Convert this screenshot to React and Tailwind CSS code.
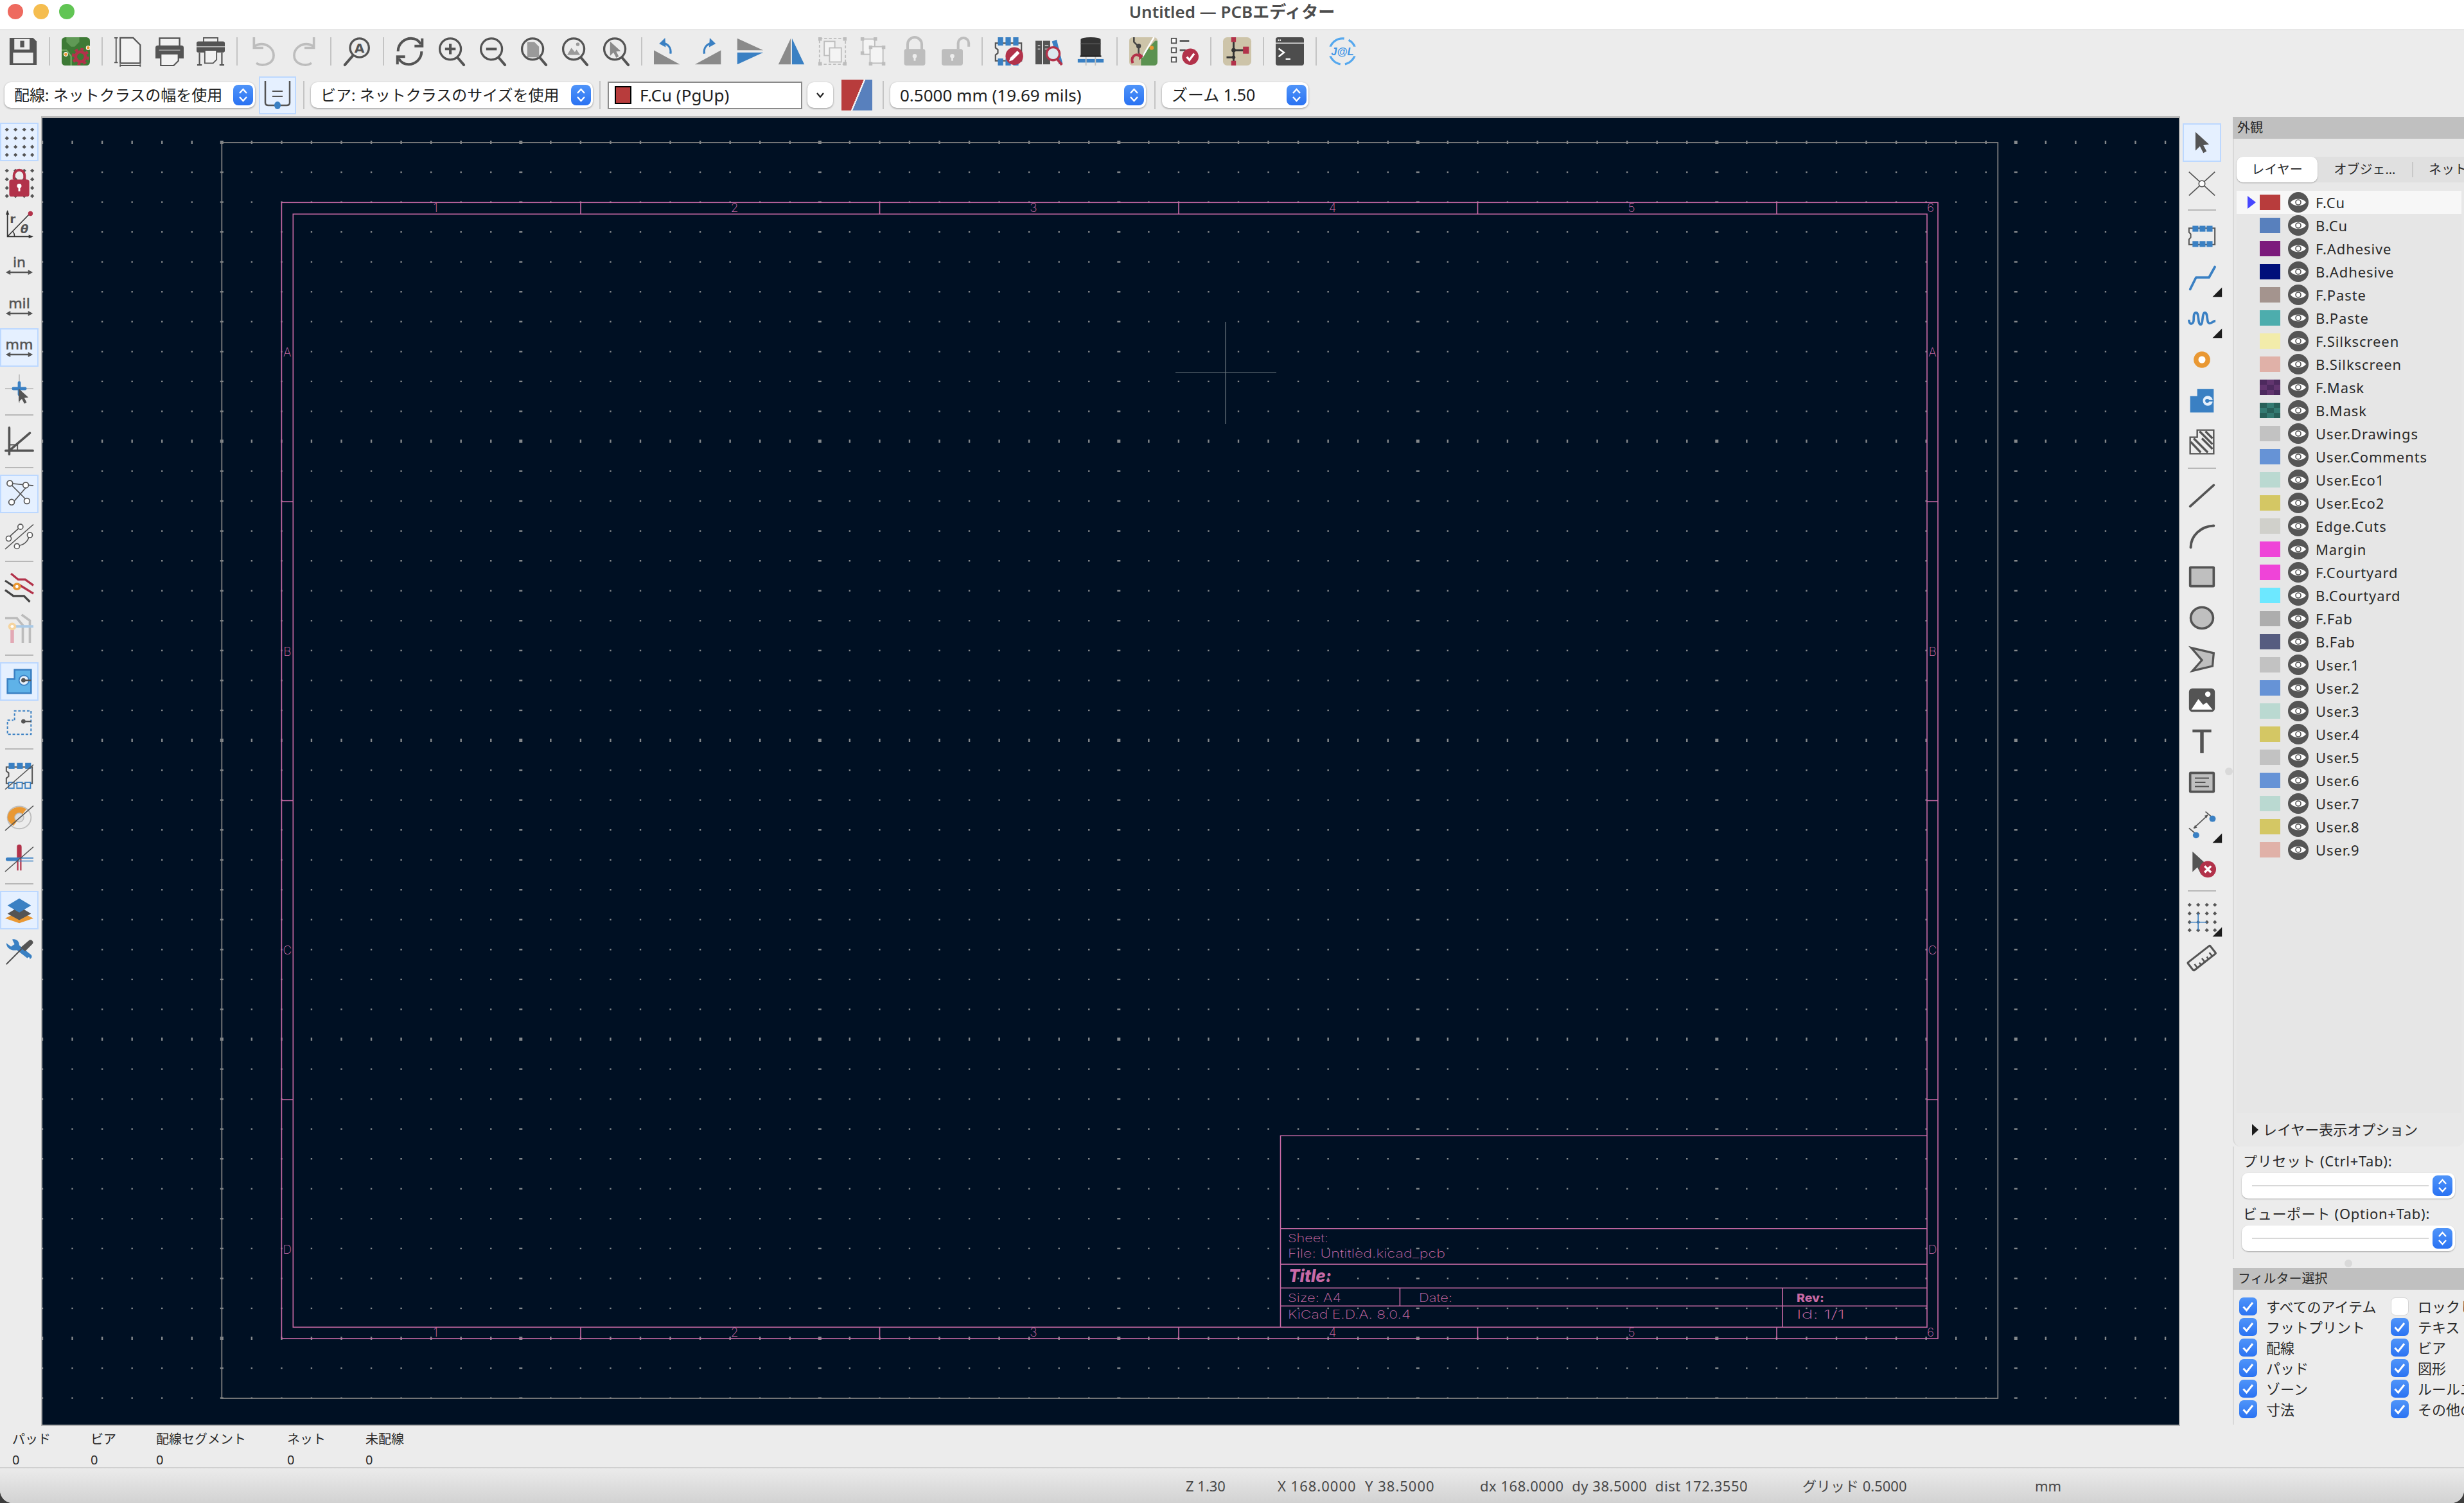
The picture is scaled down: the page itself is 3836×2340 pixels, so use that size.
import React from 'react'

const D = '#545454'
const B = '#3a80c3'
const R = '#b2324a'
const O = '#e99833'
const G = '#bdbdbd'
const PINK = '#c86aa6'

const Lens = ({ children }) => (
  <>
    <path d="M17 16.5 L23 23.5" stroke={D} strokeWidth="2.2" strokeLinecap="round" />
    <circle cx="11.5" cy="10" r="9" fill="#ececec" stroke={D} strokeWidth="1.8" />
    {children}
  </>
)

const Cursor = ({ x = 0, y = 0, s = 1, fill = D }) => (
  <path transform={`translate(${x} ${y}) scale(${s})`} d="M0 0 L0 15 L3.6 11.6 L6.4 17 L9 15.6 L6.4 10.6 L11 10 Z" fill={fill} />
)

const Diamonds = () => {
  const pts = [1.5, 8.8, 16.2, 23]
  return pts.flatMap((y, i) =>
    pts.map((x, j) => (
      <rect key={`${i}-${j}`} x={x - 1.2} y={y - 1.2} width="2.4" height="2.4" transform={`rotate(45 ${x} ${y})`} fill={D} />
    ))
  )
}

const Slash = () => <path d="M0 24 L24 3" stroke={D} strokeWidth="0.9" />

const More = () => <polygon points="29,20.5 29,28.5 21,28.5" fill="#1c1c1c" />

const BadgeCheck = ({ cx = 18, cy = 17, r = 6.5 }) => (
  <>
    <circle cx={cx} cy={cy} r={r} fill={R} />
    <path d={`M${cx - 3} ${cy + 0.2} l2.2 2.6 l4 -5.4`} stroke="#fff" strokeWidth="1.8" fill="none" />
  </>
)

const Dim = ({ y = 18 }) => (
  <path d={`M0.5 ${y} L4.5 ${y - 2.2} V${y - 0.7} H19.5 V${y - 2.2} L23.5 ${y} L19.5 ${y + 2.2} V${y + 0.7} H4.5 V${y + 2.2} Z`} fill={D} />
)

const UnitText = ({ t }) => (
  <text x="12" y="13.5" textAnchor="middle" fontSize="12" stroke={D} strokeWidth="0.3" fill={D} fontFamily="DejaVu Sans, sans-serif">{t}</text>
)

const Padlock = ({ open }) => (
  <>
    <path d={open ? 'M15 10V5a4.5 4.5 0 0 1 9 0v3' : 'M6 11V6a6 6 0 0 1 12 0v5'} transform={open ? 'translate(-1 0)' : ''} fill="none" stroke={G} strokeWidth="2.2" />
    <rect x={open ? 0 : 3} y="10" width="18" height="14" rx="2" fill={G} />
    <circle cx={open ? 9 : 12} cy="16" r="1.8" fill="#ececec" />
    <rect x={open ? 8.2 : 11.2} y="16" width="1.6" height="4" fill="#ececec" />
  </>
)

const GroupPages = ({ un }) =>
  un ? (
    <>
      <rect x="3" y="1.5" width="10" height="13" fill="#f4f4f4" stroke={G} />
      <rect x="9" y="8" width="11" height="14" fill="#f4f4f4" stroke={G} />
      {[[1, 0], [12, 0], [1, 12], [8, 7], [19, 7], [8, 21], [19, 21]].map(([x, y]) => (
        <rect key={`${x}${y}`} x={x} y={y} width="3" height="3" fill={G} />
      ))}
    </>
  ) : (
    <>
      <rect x="1" y="1" width="22" height="22" fill="none" stroke={G} strokeWidth="1" strokeDasharray="2.4 1.6" />
      <rect x="5" y="3.5" width="9" height="12" fill="#f4f4f4" stroke={G} />
      <rect x="9.5" y="9" width="10" height="12" fill="#f4f4f4" stroke={G} />
      {[[0, 0], [21, 0], [0, 21], [21, 21]].map(([x, y]) => (
        <rect key={`${x}${y}`} x={x} y={y} width="3" height="3" fill={G} />
      ))}
    </>
  )

const icons = {
  save: (
    <>
      <path d="M0.5 0.5h20l3 3v20h-23z" fill={D} />
      <rect x="4.5" y="1.5" width="13" height="9" fill="#ececec" />
      <rect x="9.5" y="3" width="3.5" height="5.5" fill={D} />
      <rect x="3.5" y="13" width="17" height="9" fill="#ececec" />
    </>
  ),
  settings: (
    <>
      <rect x="0" y="0" width="24" height="24" rx="3" fill="#3d7a35" />
      <path d="M4 0v4l4 4h3l4 -4V0z" fill="#5f9a55" />
      <path d="M0 11h4l4 5v8" stroke="#6fa862" strokeWidth="1.2" fill="none" />
      <circle cx="16" cy="16.5" r="4.2" fill="#3d7a35" stroke={R} strokeWidth="2.6" />
      <circle cx="16" cy="16.5" r="6.4" fill="none" stroke={R} strokeWidth="2" strokeDasharray="2.6 2.4" />
      <circle cx="3.5" cy="14.5" r="1.6" fill={O} stroke="#fff" strokeWidth="0.6" />
      <circle cx="22.5" cy="9" r="1.6" fill={O} stroke="#fff" strokeWidth="0.6" />
    </>
  ),
  page: (
    <>
      <path d="M1.5 0v22M0 0.5h3M0 21.5h3" stroke={D} strokeWidth="1" fill="none" />
      <path d="M5 0.5h11l6 6v15.5h-17z" fill="#f2f2f2" stroke={D} strokeWidth="1.2" />
      <path d="M5 24h17M5 23v2M22 23v2" stroke={D} strokeWidth="1" fill="none" />
    </>
  ),
  print: (
    <>
      <rect x="3.5" y="0.8" width="17" height="9" fill="#f0f0f0" stroke={D} strokeWidth="1.3" />
      <path d="M0 9a2 2 0 0 1 2 -2h20a2 2 0 0 1 2 2v9h-24z" fill={D} />
      <path d="M3 11h18" stroke="#9a9a9a" strokeWidth="1" />
      <path d="M4.5 14h15v6l-4 4h-11z" fill="#f2f2f2" stroke={D} strokeWidth="1.2" />
    </>
  ),
  plot: (
    <>
      <rect x="6" y="0.5" width="12" height="5" fill="#f0f0f0" stroke={D} strokeWidth="1" />
      <rect x="0" y="3.5" width="24" height="9.5" rx="1.5" fill={D} />
      <path d="M0 8h24" stroke="#bdbdbd" strokeWidth="0.8" />
      <path d="M2.5 13v10M21.5 13v10M0.5 23.5h4M19.5 23.5h4" stroke={D} strokeWidth="1.2" />
      <path d="M7 11h10v8l-3 3h-7z" fill="#f2f2f2" stroke={D} strokeWidth="1" />
    </>
  ),
  undo: (
    <g fill="none" stroke={G} strokeWidth="2">
      <path d="M4 8C8 5 13 5 17 8C22 12 22 19 17 22C13 24 9 24 6 22" />
      <path d="M4 0V9H12" />
    </g>
  ),
  redo: (
    <g transform="translate(24 0) scale(-1 1)" fill="none" stroke={G} strokeWidth="2">
      <path d="M4 8C8 5 13 5 17 8C22 12 22 19 17 22C13 24 9 24 6 22" />
      <path d="M4 0V9H12" />
    </g>
  ),
  find: (
    <>
      <path d="M8.5 15.5L1.5 23.5" stroke={D} strokeWidth="2.2" strokeLinecap="round" />
      <circle cx="14" cy="9" r="8" fill="#ececec" stroke={D} strokeWidth="1.8" />
      <text x="14" y="13" textAnchor="middle" fontSize="11" fontWeight="700" fill={D} fontFamily="DejaVu Sans, sans-serif">A</text>
    </>
  ),
  refresh: (
    <g fill="none" stroke={D} strokeWidth="2.2">
      <path d="M2 12C2 5 8 1 13 1C16.5 1 19.5 2.5 21.5 6" />
      <path d="M22.5 1V7.5H16" />
      <path d="M22 12C22 19 16 23 11 23C7.5 23 4.5 21.5 2.5 18" />
      <path d="M1.5 23V16.5H8" />
    </g>
  ),
  zoomIn: <Lens><path d="M7 10h9M11.5 5.5v9" stroke={D} strokeWidth="2.2" /></Lens>,
  zoomOut: <Lens><path d="M7 10h9" stroke={D} strokeWidth="2.2" /></Lens>,
  zoomFit: <Lens><path d="M7 4h6l4 4v9h-10z" fill="#9a9a9a" /></Lens>,
  zoomObj: <Lens><path d="M6 15l3.5 -6 3 3.5 1.5 -2 3 4.5z" fill="#9a9a9a" /><circle cx="15" cy="6" r="1.5" fill="#9a9a9a" /></Lens>,
  zoomSel: <Lens><Cursor x={7.5} y={3.5} s={0.82} fill="#8a8a8a" /></Lens>,
  rotCcw: (
    <>
      <polygon points="0,23 0,11 22,23" fill="#8a8a8a" />
      <path d="M14 14C15 9 12 6 8 5" stroke={B} strokeWidth="1.8" fill="none" />
      <path d="M9.5 0.5L4.5 5.5L10 8.5z" fill={B} />
    </>
  ),
  rotCw: (
    <>
      <polygon points="22,23 22,11 0,23" fill="#8a8a8a" />
      <path d="M8 14C7 9 10 6 14 5" stroke={B} strokeWidth="1.8" fill="none" />
      <path d="M12.5 0.5L17.5 5.5L12 8.5z" fill={B} />
    </>
  ),
  mirrorV: (
    <>
      <polygon points="1,1 23,11 1,11" fill="#8a8a8a" />
      <polygon points="1,13 23,13 1,23" fill={B} />
    </>
  ),
  mirrorH: (
    <>
      <polygon points="11.5,1 1,23 11.5,23" fill="#8a8a8a" />
      <polygon points="12.5,1 23,23 12.5,23" fill={B} />
    </>
  ),
  group: <GroupPages />,
  ungroup: <GroupPages un />,
  lock: <Padlock />,
  unlock: <Padlock open />,
  drc: (
    <>
      <path d="M1 5h22v15h-22v-5l2 -1.5v-3l-2 -1.5z" fill="none" stroke={D} strokeWidth="1.2" />
      {[3, 9.5, 16].map((x) => <rect key={x} x={x} y="0" width="4.5" height="7" fill={B} />)}
      {[3, 9.5, 16].map((x) => <rect key={x} x={x} y="18" width="4.5" height="6" fill={B} />)}
      <circle cx="17" cy="16" r="7.5" fill={R} />
      <path d="M12.5 20.5l1 -3 6 -6 2 2 -6 6z" fill="#fff" />
    </>
  ),
  library: (
    <>
      <rect x="0" y="3" width="5.5" height="20" fill={D} />
      <rect x="6.5" y="3" width="6" height="20" fill={D} />
      <path d="M2 7h2M2 10h2M8 7h3M8 10h3" stroke="#bbb" strokeWidth="1" />
      <path d="M14 3.5l4 -1.5 5 20 -3 1z" fill={B} />
      <circle cx="15" cy="14" r="5.5" fill="#dce8ee" stroke={R} strokeWidth="1.8" />
      <path d="M18.5 18.5l4 5" stroke={R} strokeWidth="2.2" />
    </>
  ),
  viewer3d: (
    <>
      <path d="M3.5 2a8.5 2 0 0 1 17 0v14h-17z" fill="#333" />
      <path d="M3.5 5.5h17" stroke="#555" strokeWidth="0.8" />
      <rect x="1" y="18.5" width="22" height="3" fill={B} />
      <path d="M8 16v8M16 16v8" stroke="#c0c0c0" strokeWidth="1" />
      <rect x="3" y="15.5" width="18" height="1.2" fill="#222" />
    </>
  ),
  router: (
    <>
      <rect x="0" y="0" width="24" height="24" rx="3" fill="#cdc4a9" />
      <path d="M24 3v18a3 3 0 0 1 -3 3H10v-8l12 -13z" fill="#5b9251" />
      <path d="M21 0L11 17" stroke="#fff" strokeWidth="1.4" />
      <path d="M4 0v4l4 4v6" stroke="#444" strokeWidth="1.4" fill="none" />
      <circle cx="8" cy="7.5" r="2" fill="#444" />
      <circle cx="19" cy="9" r="1.8" fill={O} />
      <path d="M3 22C1 17 5 13 9 16" stroke={R} strokeWidth="2.2" fill="none" />
      <path d="M8 13l4 3 -3.5 3.5z" fill={R} />
    </>
  ),
  checklist: (
    <>
      {[3, 11, 19].map((y) => <rect key={y} x="1" y={y - 2} width="4" height="4" fill="#fff" stroke={D} strokeWidth="1" />)}
      <path d="M8 3h8M8 11h5" stroke={D} strokeWidth="1.5" />
      <BadgeCheck cx={17} cy={16.5} r={7} />
    </>
  ),
  schematic: (
    <>
      <rect x="0" y="0" width="24" height="24" rx="3.5" fill="#cdc4a9" />
      <path d="M9 2v20M9 11h10M9 17H3" stroke="#333" strokeWidth="1.6" />
      <circle cx="9" cy="11" r="1.8" fill="#333" />
      <circle cx="9" cy="17" r="1.5" fill="#333" />
      <rect x="7" y="0" width="4" height="4" fill={R} />
      <rect x="17" y="8" width="5" height="6" fill={R} />
      <rect x="7" y="20" width="4" height="4" fill={R} />
    </>
  ),
  terminal: (
    <>
      <rect x="0" y="0" width="24" height="24" rx="2" fill="#4d4d4d" />
      <path d="M0 5h24" stroke="#fff" strokeWidth="0.7" />
      <path d="M2 2.5h3" stroke="#fff" strokeWidth="1.2" strokeDasharray="0.9 0.6" />
      <path d="M2.5 9.5l4.5 3.5 -4.5 3.5" stroke="#fff" strokeWidth="1.4" fill="none" />
      <path d="M8.5 18.5h4" stroke="#fff" strokeWidth="1.2" />
    </>
  ),
  jlc: (
    <>
      <circle cx="12" cy="12" r="11" fill="none" stroke="#55a8ee" strokeWidth="1.8" strokeDasharray="15 4" />
      <rect x="0" y="8" width="24" height="8" fill="#ececec" />
      <text x="12" y="15.5" textAnchor="middle" fontSize="9" fontStyle="italic" fontWeight="700" fill="#3f95e6" fontFamily="Liberation Sans, sans-serif">J@L</text>
    </>
  ),
  grid: <Diamonds />,
  gridLock: (
    <>
      <Diamonds />
      <path d="M7.5 9V5.5a4.5 4.5 0 0 1 9 0V9" fill="none" stroke={R} strokeWidth="2.2" />
      <rect x="3.5" y="9" width="17" height="14.5" rx="2" fill={R} />
      <circle cx="12" cy="14.5" r="1.9" fill="#fff" />
      <rect x="11.2" y="15" width="1.6" height="4" fill="#fff" />
    </>
  ),
  polar: (
    <>
      <path d="M2 1v21.5h21" fill="none" stroke="#333" strokeWidth="1" />
      <path d="M2 0l-1.5 4h3zM24 22.5l-4 -1.5v3z" fill="#333" />
      <path d="M2 22.5L21 3" stroke="#333" strokeWidth="0.9" />
      <path d="M8 22.5a7 7 0 0 0 -1.5 -4.5" stroke="#333" strokeWidth="0.8" fill="none" />
      <circle cx="21.5" cy="3" r="2" fill={R} />
      <text x="4" y="11" fontSize="10" fontWeight="700" fill={D} fontFamily="DejaVu Sans, sans-serif">r</text>
      <text x="13" y="19.5" fontSize="10" fontStyle="italic" fontWeight="700" fill={D} fontFamily="DejaVu Sans, sans-serif">θ</text>
    </>
  ),
  inch: <><UnitText t="in" /><Dim /></>,
  mil: <><UnitText t="mil" /><Dim /></>,
  mm: <><UnitText t="mm" /><Dim /></>,
  fullCross: (
    <>
      <path d="M0 12h24M12 0v24" stroke="#b5b5b5" strokeWidth="0.8" />
      <path d="M7 12h10M12 7v10" stroke={B} strokeWidth="2.6" strokeLinecap="round" />
      <Cursor x={11.5} y={12} s={0.75} />
    </>
  ),
  angle: (
    <>
      <path d="M3.5 0.5V23M0.5 20H23.5" stroke={D} strokeWidth="2" strokeLinecap="round" />
      <path d="M3.5 20L21 5" stroke={D} strokeWidth="2" strokeLinecap="round" />
      <path d="M3.5 15h7v5" stroke={D} strokeWidth="1" fill="none" />
    </>
  ),
  ratsnest: (
    <>
      <path d="M4 3L24 5M7 19L19 5M4 3L19 18" stroke={D} strokeWidth="0.9" />
      {[[4, 3], [17.5, 4.5], [5.5, 19], [18.5, 18]].map(([x, y]) => (
        <circle key={x} cx={x} cy={y} r="2.4" fill="#fff" stroke={D} strokeWidth="0.9" />
      ))}
    </>
  ),
  curved: (
    <>
      <path d="M0 24L24 3M3 14L13 5M10 21C15 21 19 18 20 14" fill="none" stroke={D} strokeWidth="0.9" />
      {[[3, 15], [13, 5], [10, 21.5], [21, 12]].map(([x, y]) => (
        <circle key={x} cx={x} cy={y} r="2.2" fill="#fff" stroke={D} strokeWidth="0.9" />
      ))}
    </>
  ),
  tracks: (
    <>
      <path d="M5 0L11 5H17L24 10M11 9L16 12L24 17" stroke={R} strokeWidth="1.8" fill="none" />
      <path d="M0 6L9 12M0 14L7 19H16L21 24" stroke="#444" strokeWidth="1.8" fill="none" />
      <ellipse cx="10" cy="11" rx="3.4" ry="3.2" fill={O} />
      <circle cx="10" cy="11" r="1.3" fill="#fff" />
    </>
  ),
  tracksDim: (
    <>
      <path d="M0 3H10L15 9V24M14 0L21 5V24" stroke="#bcbcbc" strokeWidth="2" fill="none" />
      <path d="M6 13V24" stroke="#e2a8b4" strokeWidth="3" />
      <path d="M6 10H24" stroke="#a9c9e6" strokeWidth="2.2" />
      <ellipse cx="6" cy="10" rx="3.4" ry="3.2" fill="#f5d49f" />
      <circle cx="6" cy="10" r="1.3" fill="#fff" />
    </>
  ),
  zoneFill: (
    <>
      <path d="M8 10V2H22V22H2V10z" fill="#5fb2e8" stroke={B} strokeWidth="1.4" />
      <circle cx="16" cy="11" r="4.2" fill="#e6f0fb" stroke={B} strokeWidth="1" />
      <circle cx="15.5" cy="11" r="1.8" fill={D} />
      <path d="M15.5 11H22" stroke={D} strokeWidth="1.3" />
    </>
  ),
  zoneDash: (
    <>
      <path d="M8 10V2H22V22H2V10H7" fill="none" stroke={B} strokeWidth="1.1" strokeDasharray="2.2 1.5" />
      <circle cx="15.5" cy="11" r="1.8" fill={D} />
      <path d="M15.5 11H22" stroke={D} strokeWidth="1.3" />
    </>
  ),
  fpOff: (
    <>
      <path d="M1 5h22v14h-22v-4.5l2 -1.5v-3l-2 -1.5z" fill="none" stroke={D} strokeWidth="1.1" />
      {[3, 10, 17].map((x) => <rect key={x} x={x} y="1.5" width="5" height="5" fill={B} />)}
      {[3, 10, 17].map((x) => <rect key={x} x={x} y="18" width="4.5" height="5" fill="#ececec" stroke={B} strokeWidth="1" />)}
      <Slash />
    </>
  ),
  padOff: (
    <>
      <ellipse cx="12" cy="13" rx="10" ry="9.5" fill="none" stroke="#bdbdbd" strokeWidth="1" />
      <path d="M2 13a10 9.5 0 0 1 16 -7L7 20a10 9.5 0 0 1 -5 -7z" fill={O} />
      <circle cx="12" cy="13" r="3.8" fill="#ddd" stroke="#bdbdbd" strokeWidth="0.8" />
      <Slash />
    </>
  ),
  viaOff: (
    <>
      <path d="M10 3a2 2 0 0 1 4 0v10h-4z" fill={R} />
      <path d="M10.7 13v10M13.3 13v10" stroke={R} strokeWidth="1.2" />
      <path d="M2 13.5H10" stroke={B} strokeWidth="3" strokeLinecap="round" />
      <path d="M10 12.5H24M10 15H24" stroke={B} strokeWidth="0.9" />
      <Slash />
    </>
  ),
  layers: (
    <>
      <polygon points="12,14 24,20 12,24 0,20" fill={O} transform="translate(0 -1)" />
      <polygon points="12,9 22,15 12,20.5 2,15" fill={D} />
      <polygon points="12,2 22,8 12,14 2,8" fill={B} />
    </>
  ),
  tools: (
    <>
      <path d="M1 5l4 3 3 -2 -2 -4c3 -1 6 1 6 5l10 8c2 2 -1 5 -3 3l-9 -7c-5 1 -9 -2 -9 -6z" fill={B} />
      <circle cx="20" cy="18" r="0.9" fill="#fff" />
      <path d="M1 23L14 10" stroke={D} strokeWidth="1.1" />
      <path d="M13 9l7 -6a2 2 0 0 1 3 3l-6 6z" fill={D} />
    </>
  ),
  select: <Cursor x={6.5} y={3} s={1.05} />,
  xConn: (
    <>
      <path d="M1 2L23 22M1 22L23 2" stroke={D} strokeWidth="0.9" />
      <circle cx="12" cy="12" r="2.6" fill="#fff" stroke={D} strokeWidth="0.9" />
    </>
  ),
  fpBlue: (
    <>
      <path d="M1 5h22v14h-22v-4.5l1.5 -1.5v-3l-1.5 -1.5z" fill="none" stroke={D} strokeWidth="1.1" />
      {[4, 10, 16].map((x) => <rect key={x} x={x} y="3" width="5" height="5" fill={B} />)}
      {[4, 10, 16].map((x) => <rect key={x} x={x} y="16" width="5" height="5" fill={B} />)}
    </>
  ),
  route: (
    <>
      <path d="M2 22L7 12H18L23 3" stroke={B} strokeWidth="2" strokeLinecap="round" strokeLinejoin="round" fill="none" />
      <More />
    </>
  ),
  meander: (
    <>
      <path d="M1 13c0 5 4 4 4 0c0 -3 0 -6 2 -6c3 0 1 10 4 10c2 0 1 -10 3.5 -10c3 0 1 9 4 9c2 0 3 -2 5 -2" stroke={B} strokeWidth="2" fill="none" />
      <More />
    </>
  ),
  via: (
    <>
      <circle cx="12" cy="12" r="7" fill={O} />
      <circle cx="12" cy="12" r="3" fill="#fff" />
    </>
  ),
  zoneBlue: (
    <>
      <path d="M8 8V2H22V22H2V8z" fill={B} />
      <circle cx="17" cy="12" r="4.2" fill="#e6f0fb" />
      <circle cx="16.5" cy="12" r="1.7" fill={B} />
      <path d="M16 12H22" stroke={B} strokeWidth="1.3" />
    </>
  ),
  hatch: (
    <>
      <path d="M8 8V2H22V22H2V8z" fill="#ececec" stroke={D} strokeWidth="1.3" />
      <path d="M10 3L21 14M15 3L21 9M5 9L17 21M2.5 12L11 21M12 9L21 18" stroke={D} strokeWidth="1.8" />
    </>
  ),
  line: <path d="M2 22L22 4" stroke={D} strokeWidth="2" strokeLinecap="round" />,
  arc: <path d="M2.5 22C2.5 12 11 4 22 3.5" stroke={D} strokeWidth="2.2" strokeLinecap="round" fill="none" />,
  rect: <rect x="2" y="4" width="20" height="16" rx="0.5" fill="#bfbfbf" stroke={D} strokeWidth="2" />,
  circle: <ellipse cx="12" cy="12" rx="9.5" ry="9" fill="#bfbfbf" stroke={D} strokeWidth="2" />,
  poly: <path d="M3 2.5L22 7L21 18L4 22L12 13z" fill="#bfbfbf" stroke={D} strokeWidth="1.8" />,
  image: (
    <>
      <rect x="1" y="2" width="22" height="20" rx="3" fill={D} />
      <circle cx="17" cy="7" r="2.3" fill="#fff" />
      <path d="M3 20L9 11L13 16L16 14L21 20z" fill="#fff" />
    </>
  ),
  text: <path d="M4 2H20V4.5H13.5V22H10.5V4.5H4z" fill={D} />,
  textBox: (
    <>
      <rect x="2" y="4" width="20" height="16" rx="0.5" fill="#bfbfbf" stroke={D} strokeWidth="2" />
      <path d="M6 8.5H18M6 12H15M6 15.5H18" stroke={D} strokeWidth="1.1" />
    </>
  ),
  dim: (
    <>
      <path d="M1 16L7 21M15 2L21 7M5 16L17 5" stroke={D} strokeWidth="0.9" />
      <path d="M5 16.5l1 -3 2 2zM17 4.5l-1 3 -2 -2z" fill={D} />
      <circle cx="7" cy="22" r="2.7" fill={B} />
      <circle cx="21" cy="8" r="2.7" fill={B} />
      <More />
    </>
  ),
  erase: (
    <>
      <Cursor x={4} y={1} s={1.15} />
      <circle cx="17" cy="16" r="7" fill={R} />
      <path d="M14.3 13.3L19.7 18.7M19.7 13.3L14.3 18.7" stroke="#fff" strokeWidth="1.9" />
    </>
  ),
  gridOrigin: (
    <>
      <Diamonds />
      <path d="M8.8 8.8V23M1.5 16.2H16.2" stroke={B} strokeWidth="0.9" />
      <More />
    </>
  ),
  ruler: (
    <g transform="rotate(-38 12 12)" fill="none" stroke={D}>
      <rect x="0" y="7.5" width="24" height="8.5" rx="0.8" strokeWidth="1.7" />
      <path d="M4 16V12M8 16V13.5M12 16V12M16 16V13.5M20 16V12" strokeWidth="1.4" />
    </g>
  ),
}

const topTools = [
  'save', '|', 'settings', '|', 'page', 'print', 'plot', '|', 'undo', 'redo', '|', 'find', '|',
  'refresh', 'zoomIn', 'zoomOut', 'zoomFit', 'zoomObj', 'zoomSel', '|',
  'rotCcw', 'rotCw', 'mirrorV', 'mirrorH', 'group', 'ungroup', 'lock', 'unlock', '|',
  'drc', 'library', 'viewer3d', '|', 'router', 'checklist', '|', 'schematic', '|', 'terminal', '|', 'jlc',
]

const leftTools = [
  'grid!', 'gridLock', 'polar', 'inch', 'mil', 'mm!', 'fullCross', '|', 'angle', '|', 'ratsnest!', 'curved', '|',
  'tracks', 'tracksDim', '|', 'zoneFill!', 'zoneDash', '|', 'fpOff', 'padOff', 'viaOff', '|', 'layers!', 'tools',
]

const rightTools = [
  'select!', 'xConn', '|', 'fpBlue', 'route', 'meander', 'via', 'zoneBlue', 'hatch', '|',
  'line', 'arc', 'rect', 'circle', 'poly', 'image', 'text', 'textBox', 'dim', 'erase', '|', 'gridOrigin', 'ruler',
]

const layers = [
  ['F.Cu', 'bg-[#b83c3c]'],
  ['B.Cu', 'bg-[#5880bd]'],
  ['F.Adhesive', 'bg-[#7c1a7c]'],
  ['B.Adhesive', 'bg-[#000f7a]'],
  ['F.Paste', 'bg-[#a4948e]'],
  ['B.Paste', 'bg-[#4dadad]'],
  ['F.Silkscreen', 'bg-[#f2ecaa]'],
  ['B.Silkscreen', 'bg-[#e0b1a8]'],
  ['F.Mask', 'bg-[repeating-conic-gradient(#62356f_0_25%,#4d2a5e_0_50%)] bg-[length:22px_16px]'],
  ['B.Mask', 'bg-[repeating-conic-gradient(#347a72_0_25%,#286059_0_50%)] bg-[length:22px_16px]'],
  ['User.Drawings', 'bg-[#c2c2c2]'],
  ['User.Comments', 'bg-[#6693d6]'],
  ['User.Eco1', 'bg-[#bad9d1]'],
  ['User.Eco2', 'bg-[#d4c764]'],
  ['Edge.Cuts', 'bg-[#d0d0cb]'],
  ['Margin', 'bg-[#ef44d8]'],
  ['F.Courtyard', 'bg-[#ef44d8]'],
  ['B.Courtyard', 'bg-[#6de8ff]'],
  ['F.Fab', 'bg-[#adadad]'],
  ['B.Fab', 'bg-[#565c80]'],
  ['User.1', 'bg-[#c2c2c2]'],
  ['User.2', 'bg-[#6693d6]'],
  ['User.3', 'bg-[#bad9d1]'],
  ['User.4', 'bg-[#d4c764]'],
  ['User.5', 'bg-[#c2c2c2]'],
  ['User.6', 'bg-[#6693d6]'],
  ['User.7', 'bg-[#bad9d1]'],
  ['User.8', 'bg-[#d4c764]'],
  ['User.9', 'bg-[#e0b1a8]'],
]

const filters = [
  ['すべてのアイテム', true],
  ['ロックしたアイテム', false],
  ['フットプリント', true],
  ['テキスト', true],
  ['配線', true],
  ['ビア', true],
  ['パッド', true],
  ['図形', true],
  ['ゾーン', true],
  ['ルールエリア', true],
  ['寸法', true],
  ['その他の項目', true],
]

const stats = [
  ['パッド', 'w-[122px]'],
  ['ビア', 'w-[102px]'],
  ['配線セグメント', 'w-[204px]'],
  ['ネット', 'w-[122px]'],
  ['未配線', 'w-[122px]'],
]

const Icon = ({ name }) => (
  <svg viewBox="0 0 24 24" className="block h-[44px] w-[44px] overflow-visible">{icons[name]}</svg>
)

// one toolbar column, "|" is a separator and a trailing "!" means toggled on
const VTools = ({ items }) =>
  items.map((t, i) =>
    t === '|' ? (
      <div key={i} className="flex h-[18px] w-[60px] items-center justify-center">
        <div className="h-[2px] w-[44px] bg-[#b8b8b8]" />
      </div>
    ) : (
      <div key={i} className="flex h-[64px] w-[60px] items-center justify-center">
        <div className={t.endsWith('!') ? 'flex h-[60px] w-[60px] items-center justify-center border-2 border-[#bcd8ff] bg-[#e5f0ff]' : 'flex h-[60px] w-[60px] items-center justify-center'}>
          <Icon name={t.replace('!', '')} />
        </div>
      </div>
    )
  )

const BlueBox = () => (
  <div className="rounded-[8px] bg-gradient-to-b from-[#4f94f9] to-[#2a72f2]">
    <svg viewBox="0 0 31 32" className="h-[32px] w-[31px]">
      <path d="M10 13l5.5 -6 5.5 6M10 19l5.5 6 5.5 -6" fill="none" stroke="#fff" strokeWidth="2.4" />
    </svg>
  </div>
)

const Select = ({ className, label }) => (
  <div className={`flex h-[40px] items-center justify-between rounded-[10px] bg-white pl-[15px] pr-[3px] whitespace-nowrap text-[#222] shadow-[0_1px_3px_rgba(0,0,0,0.4)] ${className}`}>
    <span>{label}</span>
    <BlueBox />
  </div>
)

const Preset = () => (
  <div className="flex h-[40px] w-[332px] shrink-0 items-center rounded-[10px] bg-white pl-[16px] pr-[4px] shadow-[0_1px_2px_rgba(0,0,0,0.3)]">
    <div className="mr-[6px] h-[2px] flex-1 bg-[#d8d8d8]" />
    <BlueBox />
  </div>
)

const Sep = ({ className }) => <div className={`h-[44px] w-[2px] bg-[#c4c4c4] ${className}`} />

const Eye = () => (
  <svg viewBox="0 0 32 32" className="h-[32px] w-[32px]">
    <circle cx="16" cy="16" r="16" fill="#555" />
    <path d="M4 16C9 9 23 9 28 16C23 23 9 23 4 16z" fill="#fff" />
    <circle cx="16" cy="16" r="4" fill="#fff" stroke="#555" strokeWidth="1.6" />
  </svg>
)

const Check = ({ on }) =>
  on ? (
    <div className="h-[28px] w-[28px] shrink-0 rounded-[7px] bg-gradient-to-b from-[#4f94f9] to-[#2a72f2]">
      <svg viewBox="0 0 28 28" className="h-[28px] w-[28px]">
        <path d="M6.5 14.5l5 5.5 9.5 -12" fill="none" stroke="#fff" strokeWidth="3" />
      </svg>
    </div>
  ) : (
    <div className="h-[28px] w-[28px] shrink-0 rounded-[7px] border border-[#d4d4d4] bg-white" />
  )

// the pcb canvas works in screen pixels, 9.31px is 1mm at this zoom
const GRID = 46.55
const xs = Array.from({ length: 72 }, (_, i) => i)
const ys = Array.from({ length: 44 }, (_, i) => i)

const gridDots = ys.flatMap((r) =>
  xs.map((c) => {
    const x = 345.3 + (c - 6) * GRID
    const y = 221.5 + r * GRID
    const w = (c - 6) % 10 === 0 ? 5 : 2.4
    const h = r % 10 === 0 ? 5 : 2.4
    return <rect key={`${r}-${c}`} x={x - w / 2} y={y - h / 2} width={w} height={h} fill="#85898c" />
  })
)

const Mono = ({ x, y, w, size = 18, bold, italic, anchor, children }) => (
  <text
    x={x}
    y={y}
    textLength={w}
    lengthAdjust={w ? 'spacingAndGlyphs' : undefined}
    textAnchor={anchor}
    fontSize={size}
    fontWeight={bold ? 800 : 200}
    fontStyle={italic ? 'italic' : undefined}
    fill={PINK}
    fontFamily="Inter, sans-serif"
  >
    {children}
  </text>
)

const Board = () => (
  <svg viewBox="66 184 3326 2034" className="block h-[2034px] w-[3326px]">
    <rect x="66" y="184" width="3326" height="2034" fill="#001023" />
    {gridDots}
    <rect x="345.3" y="222" width="2765" height="1955" fill="none" stroke="#7f7f7f" strokeWidth="1.8" />
    <g fill="none" stroke={PINK} strokeWidth="1.6">
      <rect x="438.4" y="315.3" width="2578.6" height="1768.7" />
      <rect x="456.3" y="333.3" width="2543.7" height="1733" />
      <path d="M904 315V333M1369.5 315V333M1835 315V333M2300.5 315V333M2766 315V333" />
      <path d="M904 2066V2084M1369.5 2066V2084M1835 2066V2084M2300.5 2066V2084M2766 2066V2084" />
      <path d="M438 781H456M438 1246.5H456M438 1712H456M3000 781H3017M3000 1246.5H3017M3000 1712H3017" />
      <path d="M1993.5 2066V1768.3H3000M1993.5 1912.7H3000M1993.5 1968.3H3000M1993.5 2005.3H3000M1993.5 2033.3H3000M2179.4 2005.3V2033.3M2775 2005.3V2066" />
    </g>
    {['1', '2', '3', '4', '5', '6'].map((n, i) => (
      <React.Fragment key={n}>
        <Mono x={678 + i * 465.5} y={330} anchor="middle" size={19}>{n}</Mono>
        <Mono x={678 + i * 465.5} y={2081} anchor="middle" size={19}>{n}</Mono>
      </React.Fragment>
    ))}
    {['A', 'B', 'C', 'D'].map((n, i) => (
      <React.Fragment key={n}>
        <Mono x={447.3} y={555 + i * 465.5} anchor="middle" size={19}>{n}</Mono>
        <Mono x={3008.5} y={555 + i * 465.5} anchor="middle" size={19}>{n}</Mono>
      </React.Fragment>
    ))}
    <Mono x={2005} y={1934} w={63}>Sheet:</Mono>
    <Mono x={2005} y={1958} w={245}>File: Untitled.kicad_pcb</Mono>
    <Mono x={2006} y={1996} w={67} size={27} bold italic>Title:</Mono>
    <Mono x={2005} y={2027} w={83}>Size: A4</Mono>
    <Mono x={2209} y={2027} w={52}>Date:</Mono>
    <Mono x={2797} y={2027} w={43} bold>Rev:</Mono>
    <Mono x={2005} y={2053} w={191}>KiCad E.D.A. 8.0.4</Mono>
    <Mono x={2797} y={2053} w={75}>Id: 1/1</Mono>
    <path d="M1830 580H1987M1908 501V660" stroke="#6d7880" strokeWidth="1.2" />
  </svg>
)

const App = () => (
  <div className="h-[2340px] w-[3836px] overflow-hidden bg-[#3d3d3d] [font-family:'Noto_Sans','Noto_Sans_CJK_JP',sans-serif]">
    <div className="flex h-full flex-col overflow-hidden rounded-b-[20px] bg-[#ececec]">
      {/* title bar */}
      <div className="grid h-[47px] shrink-0 grid-cols-[1fr_auto_1fr] items-center border-b border-[#c8c8c8] bg-white pb-[10px]">
        <div className="flex gap-[16px] pl-[12px]">
          <div className="h-[24px] w-[24px] rounded-full bg-[#ee6a5f]" />
          <div className="h-[24px] w-[24px] rounded-full bg-[#f5bd4f]" />
          <div className="h-[24px] w-[24px] rounded-full bg-[#61c554]" />
        </div>
        <div className="text-[26px] leading-[30px] font-semibold text-[#4d4d4d] whitespace-nowrap">Untitled — PCBエディター</div>
        <div />
      </div>

      {/* main toolbar */}
      <div className="flex h-[71px] shrink-0 items-start pl-[4px]">
        {topTools.map((t, i) =>
          t === '|' ? (
            <div key={i} className="flex h-[66px] w-[18px] items-center justify-center">
              <div className="h-[44px] w-[2px] bg-[#c4c4c4]" />
            </div>
          ) : (
            <div key={i} className="flex h-[66px] w-[64px] items-center justify-center">
              <Icon name={t} />
            </div>
          )
        )}
      </div>

      {/* options toolbar */}
      <div className="flex h-[63px] shrink-0 items-center pb-[3px] pl-[7px]">
        <Select className="w-[390px] text-[24px]" label="配線: ネットクラスの幅を使用" />
        <div className="ml-[6px] flex h-[59px] w-[58px] items-center justify-center border-2 border-[#bcd8ff] bg-[#e5f0ff]">
          <svg viewBox="0 0 44 44" className="h-[44px] w-[44px]">
            <path d="M3 0V34Q3 38 8 38H36Q41 38 41 34V0" fill="none" stroke={D} strokeWidth="2.5" />
            <path d="M14 16H30M14 24H30" stroke={D} strokeWidth="2" />
            <ellipse cx="22" cy="38" rx="5" ry="6" fill={B} />
          </svg>
        </div>
        <Sep className="ml-[11px]" />
        <Select className="ml-[10px] w-[439px] text-[24px]" label="ビア: ネットクラスのサイズを使用" />
        <Sep className="ml-[10px]" />
        <div className="ml-[11px] flex h-[43px] w-[303px] items-center border-2 border-[#8a8a8a] bg-white pl-[9px] text-[26px] text-[#222]">
          <div className="h-[28px] w-[26px] border-2 border-black bg-[#b83c3c]" />
          <span className="ml-[13px]">F.Cu (PgUp)</span>
        </div>
        <div className="ml-[8px] flex h-[40px] w-[40px] items-center justify-center rounded-[10px] bg-white shadow-[0_1px_3px_rgba(0,0,0,0.4)]">
          <svg viewBox="0 0 16 16" className="h-[16px] w-[16px]">
            <path d="M3 5l5 6 5 -6" fill="none" stroke="#222" strokeWidth="2.2" />
          </svg>
        </div>
        <svg viewBox="0 0 48 48" className="ml-[13px] h-[48px] w-[48px]">
          <polygon points="0,0 35,0 15,48 0,48" fill="#b83c3c" />
          <polygon points="37,0 48,0 48,48 17,48" fill="#5880bd" />
          <path d="M36 0L16 48" stroke="#fff" strokeWidth="2.5" strokeDasharray="2 1" />
        </svg>
        <Sep className="ml-[16px]" />
        <Select className="ml-[10px] w-[398px] text-[26px]" label="0.5000 mm (19.69 mils)" />
        <Sep className="ml-[13px]" />
        <Select className="ml-[10px] w-[228px] text-[25px]" label="ズーム 1.50" />
      </div>

      {/* canvas row */}
      <div className="flex h-[2039px] shrink-0">
        <div className="w-[64px] shrink-0 pt-[8px]">
          <VTools items={leftTools} />
        </div>
        <div className="h-[2039px] w-[3330px] shrink-0 border-x-2 border-t-[3px] border-b-2 border-[#b4b4b4]">
          <Board />
        </div>
        <div className="relative w-[82px] shrink-0 pl-[4px] pt-[9px]">
          <VTools items={rightTools} />
          <div className="absolute left-[70px] top-[1014px] h-[12px] w-[12px] rounded-full bg-[#d9d9d9]" />
        </div>

        {/* appearance and selection filter */}
        <div className="flex w-[360px] shrink-0 flex-col overflow-hidden pt-[1px] text-[#2a2a2a]">
          <div className="flex h-[34px] shrink-0 items-center bg-[#c0c0c0] pl-[7px] text-[20px]">外観</div>
          <div className="flex h-[1569px] shrink-0 flex-col rounded-b-[12px] border-l-2 border-[#d8d8d8] bg-[#e8e8e8]">
            <div className="mt-[28px] ml-[4px] flex h-[40px] shrink-0 items-center rounded-l-[10px] bg-[#e0e0e0] text-[20px] whitespace-nowrap">
              <div className="flex h-[40px] w-[126px] shrink-0 items-center justify-center rounded-[10px] bg-white shadow-[0_1px_2px_rgba(0,0,0,0.3)]">レイヤー</div>
              <div className="w-[147px] shrink-0 text-center">オブジェ…</div>
              <div className="h-[24px] w-[2px] shrink-0 bg-[#c8c8c8]" />
              <div className="ml-[24px] shrink-0">ネット</div>
            </div>
            <div className="mx-[4px] mt-[13px] h-[1436px] shrink-0 bg-[#e6e6e6]">
              {layers.map(([name, color], i) => (
                <div key={name} className={i === 0 ? 'flex h-[36px] items-center bg-[#f7f7f7] text-[22px] tracking-[0.9px]' : 'flex h-[36px] items-center text-[22px] tracking-[0.9px]'}>
                  <div className="flex w-[36px] justify-center pl-[10px]">
                    {i === 0 && (
                      <svg viewBox="0 0 13 20" className="h-[20px] w-[13px]">
                        <polygon points="0,0 13,10 0,20" fill="#4646ff" />
                      </svg>
                    )}
                  </div>
                  <div className={`h-[24px] w-[32px] ${color}`} />
                  <div className="ml-[12px]"><Eye /></div>
                  <span className="ml-[11px]">{name}</span>
                </div>
              ))}
            </div>
            <div className="flex flex-1 items-center pb-[1px] pl-[28px] text-[22px]">
              <svg viewBox="0 0 10 18" className="mr-[7px] h-[18px] w-[10px]">
                <polygon points="0,0 10,9 0,18" fill="#1c1c1c" />
              </svg>
              レイヤー表示オプション
            </div>
          </div>
          <div className="flex h-[175px] shrink-0 flex-col border-l-2 border-[#d8d8d8] pl-[12px] pr-[14px] pt-[8px] text-[22px] tracking-[0.7px] whitespace-nowrap">
            <div className="h-[33px] pl-[2px] leading-[28px]">プリセット (Ctrl+Tab):</div>
            <Preset />
            <div className="mt-[9px] h-[33px] pl-[2px] leading-[28px]">ビューポート (Option+Tab):</div>
            <Preset />
          </div>
          <div className="flex h-[14px] shrink-0 items-center justify-center">
            <div className="h-[12px] w-[12px] rounded-full bg-[#d9d9d9]" />
          </div>
          <div className="flex h-[34px] shrink-0 items-center bg-[#c0c0c0] pl-[8px] text-[20px]">フィルター選択</div>
          <div className="grid h-[210px] shrink-0 grid-cols-[236px_1fr] content-start border-l-2 border-[#d8d8d8] pl-[8px] pt-[10px]">
            {filters.map(([label, on]) => (
              <div key={label} className="flex h-[32px] items-center gap-[14px] overflow-hidden text-[22px] whitespace-nowrap">
                <Check on={on} />
                <span>{label}</span>
              </div>
            ))}
          </div>
        </div>
      </div>

      {/* message panel */}
      <div className="flex h-[66px] shrink-0 border-b-2 border-[#d0d0d0] pl-[19px] pt-[5px] text-[20px] leading-[32px] text-[#2a2a2a]">
        {stats.map(([label, w]) => (
          <div key={label} className={w}>
            <div>{label}</div>
            <div>0</div>
          </div>
        ))}
      </div>

      {/* status bar */}
      <div className="flex flex-1 items-center bg-gradient-to-b from-[#ebebeb] to-[#d2d2d2] pl-[1846px] text-[22px] whitespace-pre text-[#4a4a4a]">
        <div className="w-[143px]">Z 1.30</div>
        <div className="w-[315px] tracking-[1px]">X 168.0000  Y 38.5000</div>
        <div className="w-[502px] tracking-[0.53px]">dx 168.0000  dy 38.5000  dist 172.3550</div>
        <div className="w-[362px]">グリッド 0.5000</div>
        <div>mm</div>
      </div>
    </div>
  </div>
)

export default App
